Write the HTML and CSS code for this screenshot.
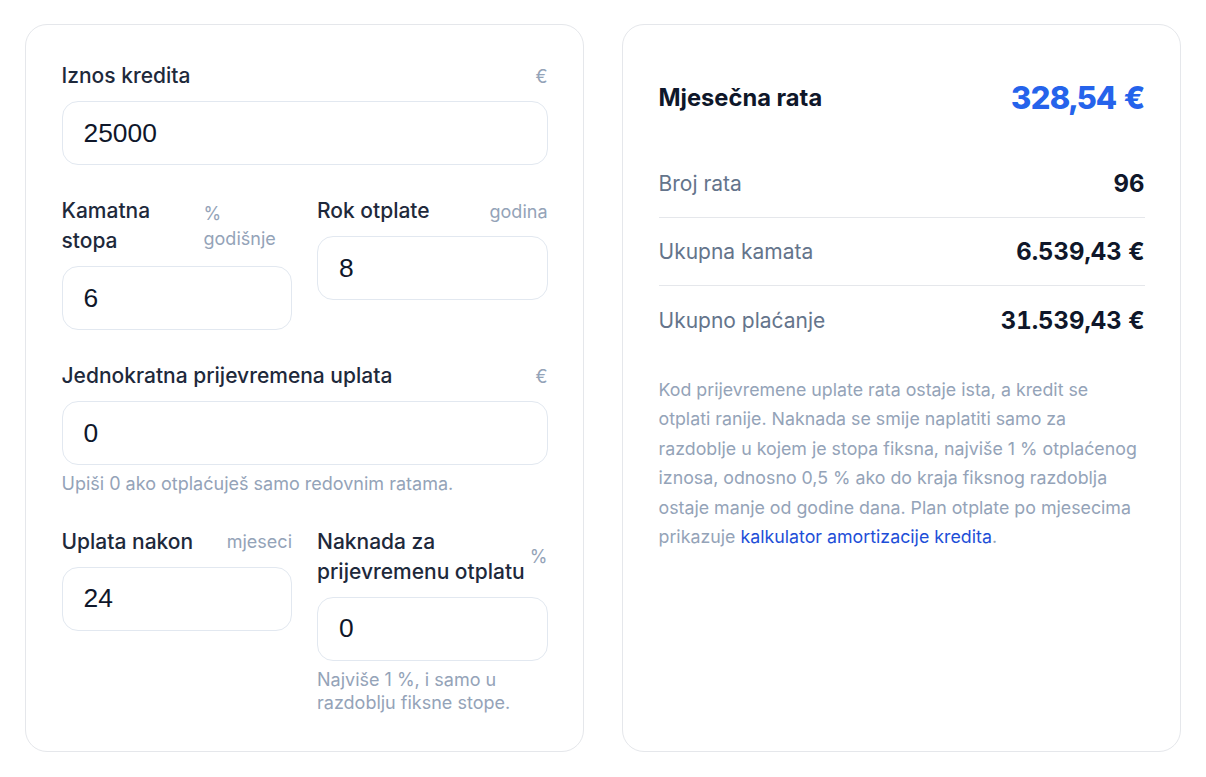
FILE: index.html
```html
<!DOCTYPE html>
<html lang="hr">
<head>
<meta charset="utf-8">
<title>Kalkulator prijevremene otplate</title>
<link rel="stylesheet" href="styles.css">
</head>
<body>
<main class="layout">
  <section class="card form-card">
    <div class="field">
      <label class="label-row" for="iznos"><span class="label">Iznos kredita</span><span class="unit">€</span></label>
      <input id="iznos" class="input" type="text" value="25000">
    </div>
    <div class="pair">
      <div class="field">
        <label class="label-row" for="kamata"><span class="label">Kamatna stopa</span><span class="unit">% godišnje</span></label>
        <input id="kamata" class="input" type="text" value="6">
      </div>
      <div class="field">
        <label class="label-row" for="rok"><span class="label">Rok otplate</span><span class="unit">godina</span></label>
        <input id="rok" class="input" type="text" value="8">
      </div>
    </div>
    <div class="field">
      <label class="label-row" for="uplata"><span class="label">Jednokratna prijevremena uplata</span><span class="unit">€</span></label>
      <input id="uplata" class="input" type="text" value="0">
      <p class="hint">Upiši 0 ako otplaćuješ samo redovnim ratama.</p>
    </div>
    <div class="pair">
      <div class="field">
        <label class="label-row" for="nakon"><span class="label">Uplata nakon</span><span class="unit">mjeseci</span></label>
        <input id="nakon" class="input" type="text" value="24">
      </div>
      <div class="field">
        <label class="label-row" for="naknada"><span class="label">Naknada za prijevremenu otplatu</span><span class="unit">%</span></label>
        <input id="naknada" class="input" type="text" value="0">
        <p class="hint">Najviše 1 %, i samo u razdoblju fiksne stope.</p>
      </div>
    </div>
  </section>

  <section class="card result-card">
    <div class="result-head">
      <span class="result-title">Mjesečna rata</span>
      <span class="result-value">328,54 €</span>
    </div>
    <div class="rows">
      <div class="row"><span class="row-label">Broj rata</span><span class="row-value">96</span></div>
      <div class="row"><span class="row-label">Ukupna kamata</span><span class="row-value">6.539,43 €</span></div>
      <div class="row"><span class="row-label">Ukupno plaćanje</span><span class="row-value">31.539,43 €</span></div>
    </div>
    <p class="note">Kod prijevremene uplate rata ostaje ista, a kredit se otplati&nbsp;ranije. Naknada se smije naplatiti samo za razdoblje u kojem je stopa fiksna, najviše 1 % otplaćenog iznosa, odnosno 0,5 % ako do kraja fiksnog razdoblja ostaje manje od godine dana. Plan otplate po mjesecima prikazuje <a class="link" href="#">kalkulator amortizacije kredita</a>.</p>
  </section>
</main>
</body>
</html>
```

FILE: styles.css
```css
* {
  box-sizing: border-box;
}

html, body {
  margin: 0;
  padding: 0;
  background: #ffffff;
}

body {
  font-family: Inter, "Noto Sans", "DejaVu Sans", sans-serif;
  color: #0f172a;
}

.layout {
  display: grid;
  grid-template-columns: 559px 559px;
  gap: 38px;
  padding: 24px 25px 26px 25px;
}

.card {
  border: 1.5px solid #e5e7eb;
  border-radius: 22px;
  background: #ffffff;
  padding: 36px 35.5px 36px 35.5px;
}

.form-card {
  display: flex;
  flex-direction: column;
  gap: 31px;
}

.pair {
  display: grid;
  grid-template-columns: 1fr 1fr;
  gap: 25px;
  align-items: start;
}

.field {
  display: flex;
  flex-direction: column;
}

.label-row {
  display: flex;
  justify-content: space-between;
  align-items: center;
  gap: 2px;
  margin-bottom: 10px;
}

.label {
  font-size: 21px;
  line-height: 30px;
  font-weight: 500;
  color: #1e293b;
}

.unit {
  font-size: 18px;
  line-height: 25px;
  color: #94a3b8;
}

.input {
  display: block;
  width: 100%;
  height: 64px;
  border: 1.5px solid #e2e8f0;
  border-radius: 16px;
  padding: 0 21px;
  font-family: "Liberation Sans", Arial, sans-serif;
  font-size: 26.4px;
  color: #0f172a;
  background: #ffffff;
  outline: none;
}

.hint {
  margin: 7px 0 0 0;
  font-size: 18px;
  line-height: 23.5px;
  color: #94a3b8;
}

.result-head {
  display: flex;
  justify-content: space-between;
  align-items: center;
  padding: 17px 0 32px 0;
  line-height: 40px;
}

.result-title {
  font-size: 23.7px;
  font-weight: 700;
  color: #0f172a;
}

.result-value {
  font-size: 31px;
  font-weight: 800;
  color: #2563eb;
  letter-spacing: -0.6px;
  font-variant-numeric: tabular-nums;
}

.rows {
  display: flex;
  flex-direction: column;
}

.row {
  display: flex;
  justify-content: space-between;
  align-items: center;
  height: 68px;
  border-bottom: 1px solid #e5e7eb;
}

.row:last-child {
  border-bottom: none;
}

.row-label {
  font-size: 21px;
  color: #64748b;
}

.row-value {
  font-size: 23.9px;
  font-weight: 700;
  color: #0f172a;
  font-variant-numeric: tabular-nums;
}

.note {
  margin: 21px 0 0 0;
  font-size: 17.8px;
  line-height: 29.4px;
  color: #94a3b8;
}

.link {
  color: #1d4ed8;
  text-decoration: none;
}
```
